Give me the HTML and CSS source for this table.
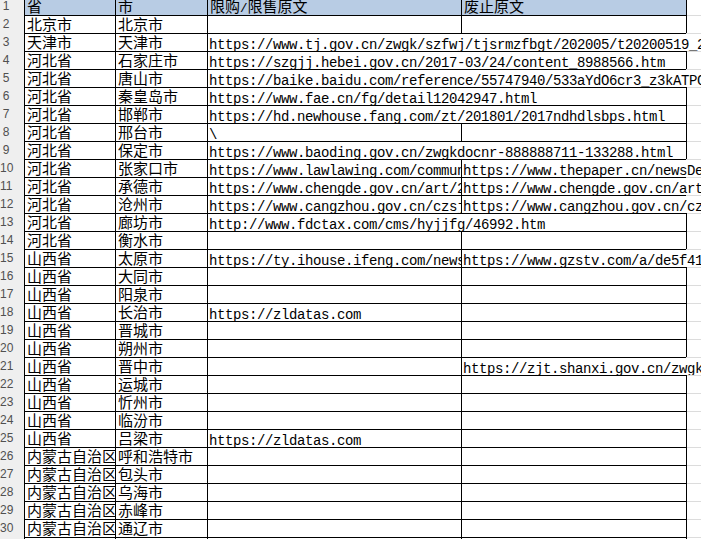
FILE: index.html
```html
<!DOCTYPE html>
<html lang="zh-CN">
<head>
<meta charset="utf-8">
<title>限购/限售原文</title>
<link rel="stylesheet" href="styles.css">
</head>
<body>
<div class="sheet">
  <div class="row head"><div class="rn">1</div><div class="c">省</div><div class="c">市</div><div class="c">限购<span class="s">/</span>限售原文</div><div class="c">废止原文</div><div class="c e"></div></div>
  <div class="row"><div class="rn">2</div><div class="c">北京市</div><div class="c">北京市</div><div class="c"></div><div class="c"></div><div class="c e"></div></div>
  <div class="row"><div class="rn">3</div><div class="c">天津市</div><div class="c">天津市</div><div class="c u span3">https://www.tj.gov.cn/zwgk/szfwj/tjsrmzfbgt/202005/t20200519_2754671.html</div></div>
  <div class="row"><div class="rn">4</div><div class="c">河北省</div><div class="c">石家庄市</div><div class="c u span2">https://szgjj.hebei.gov.cn/2017-03/24/content_8988566.htm</div><div class="c e"></div></div>
  <div class="row"><div class="rn">5</div><div class="c">河北省</div><div class="c">唐山市</div><div class="c u span3">https://baike.baidu.com/reference/55747940/533aYdO6cr3_z3kATPCQ</div></div>
  <div class="row"><div class="rn">6</div><div class="c">河北省</div><div class="c">秦皇岛市</div><div class="c u span2">https://www.fae.cn/fg/detail12042947.html</div><div class="c e"></div></div>
  <div class="row"><div class="rn">7</div><div class="c">河北省</div><div class="c">邯郸市</div><div class="c u span2">https://hd.newhouse.fang.com/zt/201801/2017ndhdlsbps.html</div><div class="c e"></div></div>
  <div class="row"><div class="rn">8</div><div class="c">河北省</div><div class="c">邢台市</div><div class="c u">\</div><div class="c"></div><div class="c e"></div></div>
  <div class="row"><div class="rn">9</div><div class="c">河北省</div><div class="c">保定市</div><div class="c u span2">https://www.baoding.gov.cn/zwgkdocnr-888888711-133288.html</div><div class="c e"></div></div>
  <div class="row"><div class="rn">10</div><div class="c">河北省</div><div class="c">张家口市</div><div class="c u">https://www.lawlawing.com/community/</div><div class="c u span2">https://www.thepaper.cn/newsDetail_forward</div></div>
  <div class="row"><div class="rn">11</div><div class="c">河北省</div><div class="c">承德市</div><div class="c u">https://www.chengde.gov.cn/art/2021/</div><div class="c u span2">https://www.chengde.gov.cn/art/2022/</div></div>
  <div class="row"><div class="rn">12</div><div class="c">河北省</div><div class="c">沧州市</div><div class="c u">https://www.cangzhou.gov.cn/czsj/</div><div class="c u span2">https://www.cangzhou.gov.cn/czsj/</div></div>
  <div class="row"><div class="rn">13</div><div class="c">河北省</div><div class="c">廊坊市</div><div class="c u span2">http://www.fdctax.com/cms/hyjjfg/46992.htm</div><div class="c e"></div></div>
  <div class="row"><div class="rn">14</div><div class="c">河北省</div><div class="c">衡水市</div><div class="c"></div><div class="c"></div><div class="c e"></div></div>
  <div class="row"><div class="rn">15</div><div class="c">山西省</div><div class="c">太原市</div><div class="c u">https://ty.ihouse.ifeng.com/news/</div><div class="c u span2">https://www.gzstv.com/a/de5f41a0</div></div>
  <div class="row"><div class="rn">16</div><div class="c">山西省</div><div class="c">大同市</div><div class="c"></div><div class="c"></div><div class="c e"></div></div>
  <div class="row"><div class="rn">17</div><div class="c">山西省</div><div class="c">阳泉市</div><div class="c"></div><div class="c"></div><div class="c e"></div></div>
  <div class="row"><div class="rn">18</div><div class="c">山西省</div><div class="c">长治市</div><div class="c u">https://zldatas.com</div><div class="c"></div><div class="c e"></div></div>
  <div class="row"><div class="rn">19</div><div class="c">山西省</div><div class="c">晋城市</div><div class="c"></div><div class="c"></div><div class="c e"></div></div>
  <div class="row"><div class="rn">20</div><div class="c">山西省</div><div class="c">朔州市</div><div class="c"></div><div class="c"></div><div class="c e"></div></div>
  <div class="row"><div class="rn">21</div><div class="c">山西省</div><div class="c">晋中市</div><div class="c"></div><div class="c u span2">https://zjt.shanxi.gov.cn/zwgk/</div></div>
  <div class="row"><div class="rn">22</div><div class="c">山西省</div><div class="c">运城市</div><div class="c"></div><div class="c"></div><div class="c e"></div></div>
  <div class="row"><div class="rn">23</div><div class="c">山西省</div><div class="c">忻州市</div><div class="c"></div><div class="c"></div><div class="c e"></div></div>
  <div class="row"><div class="rn">24</div><div class="c">山西省</div><div class="c">临汾市</div><div class="c"></div><div class="c"></div><div class="c e"></div></div>
  <div class="row"><div class="rn">25</div><div class="c">山西省</div><div class="c">吕梁市</div><div class="c u">https://zldatas.com</div><div class="c"></div><div class="c e"></div></div>
  <div class="row"><div class="rn">26</div><div class="c">内蒙古自治区</div><div class="c">呼和浩特市</div><div class="c"></div><div class="c"></div><div class="c e"></div></div>
  <div class="row"><div class="rn">27</div><div class="c">内蒙古自治区</div><div class="c">包头市</div><div class="c"></div><div class="c"></div><div class="c e"></div></div>
  <div class="row"><div class="rn">28</div><div class="c">内蒙古自治区</div><div class="c">乌海市</div><div class="c"></div><div class="c"></div><div class="c e"></div></div>
  <div class="row"><div class="rn">29</div><div class="c">内蒙古自治区</div><div class="c">赤峰市</div><div class="c"></div><div class="c"></div><div class="c e"></div></div>
  <div class="row"><div class="rn">30</div><div class="c">内蒙古自治区</div><div class="c">通辽市</div><div class="c"></div><div class="c"></div><div class="c e"></div></div>
  <div class="row"><div class="rn">31</div><div class="c"></div><div class="c"></div><div class="c"></div><div class="c"></div><div class="c e"></div></div>
</div>
</body>
</html>
```

FILE: styles.css
```css
html, body {
  margin: 0;
  padding: 0;
  background: #ffffff;
  overflow: hidden;
}

.sheet {
  margin-top: -3px;
  width: 701px;
}

.row {
  display: grid;
  grid-template-columns: 24px 91px 92px 254px 225px 1fr;
  height: 18px;
  background:
    linear-gradient(#000000, #000000) 0 0 / 686px 1px no-repeat,
    linear-gradient(#dcdcdc, #dcdcdc) 0 0 / 100% 1px no-repeat;
}

.rn {
  background: #efefef;
  color: #505050;
  font: 12px/18px "Liberation Sans", Arial, sans-serif;
  text-align: center;
  padding-right: 12px;
  overflow: hidden;
}

.c {
  border-left: 1px solid #000000;
  overflow: hidden;
  white-space: nowrap;
  padding-left: 2px;
  color: #000000;
  font: 15px/18px "Noto Sans CJK SC", sans-serif;
  min-width: 0;
}

.head .c {
  background: #b8cce4;
}

.head .c.e {
  background: transparent;
}

.u {
  padding-left: 1px;
  font: 14px/25px "Liberation Mono", "Noto Sans CJK SC", monospace;
  letter-spacing: -0.4px;
}

.s {
  font: 12.5px "Liberation Mono", monospace;
  letter-spacing: 0;
}

.span2 {
  grid-column: span 2;
}

.span3 {
  grid-column: span 3;
}
```
